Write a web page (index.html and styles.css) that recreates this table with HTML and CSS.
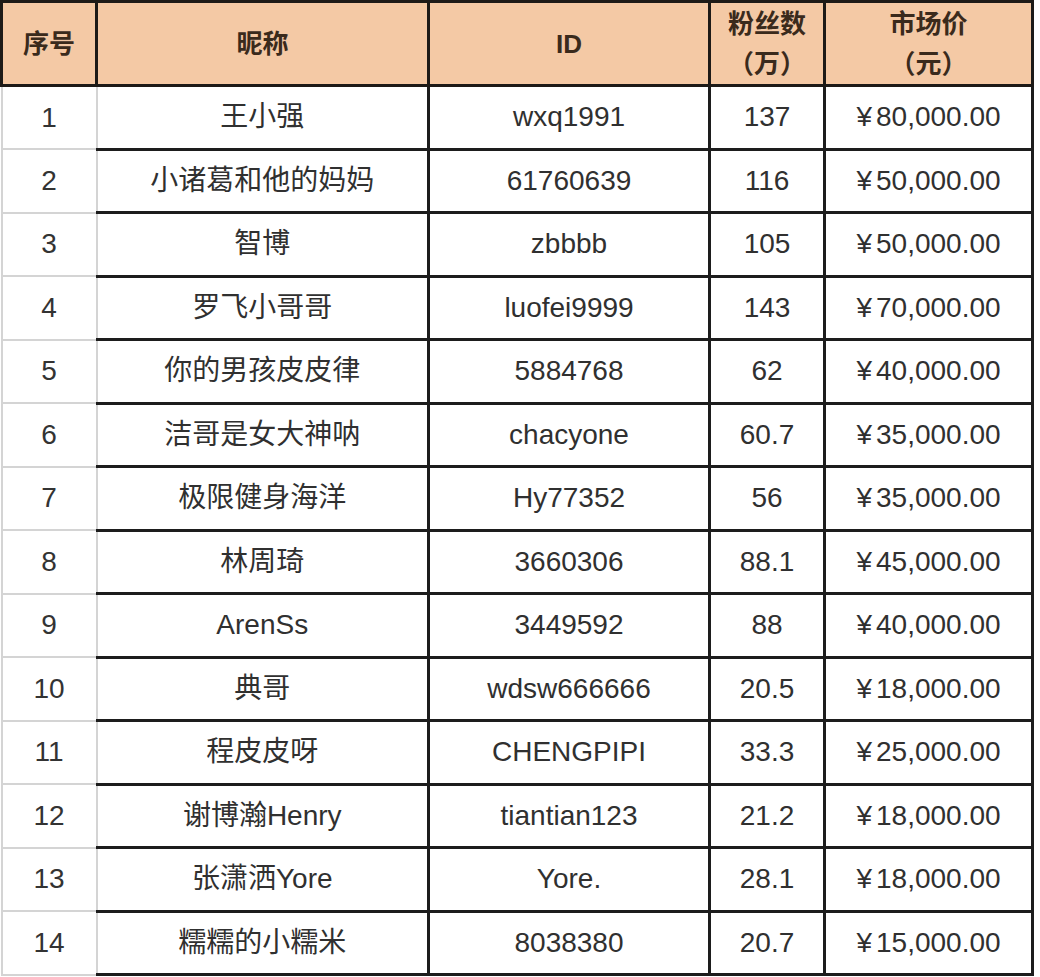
FILE: index.html
```html
<!DOCTYPE html>
<html lang="zh">
<head>
<meta charset="utf-8">
<title>价格表</title>
<link rel="stylesheet" href="styles.css">
</head>
<body>
<table class="sheet">
  <colgroup>
    <col class="c-no"><col class="c-name"><col class="c-id"><col class="c-fans"><col class="c-price">
  </colgroup>
  <thead>
    <tr>
      <th>序号</th>
      <th>昵称</th>
      <th>ID</th>
      <th><span class="line">粉丝数</span><span class="line">（万）</span></th>
      <th><span class="line">市场价</span><span class="line">（元）</span></th>
    </tr>
  </thead>
  <tbody>
    <tr><td>1</td><td>王小强</td><td>wxq1991</td><td>137</td><td><span class="yen">¥</span>80,000.00</td></tr>
    <tr><td>2</td><td>小诸葛和他的妈妈</td><td>61760639</td><td>116</td><td><span class="yen">¥</span>50,000.00</td></tr>
    <tr><td>3</td><td>智博</td><td>zbbbb</td><td>105</td><td><span class="yen">¥</span>50,000.00</td></tr>
    <tr><td>4</td><td>罗飞小哥哥</td><td>luofei9999</td><td>143</td><td><span class="yen">¥</span>70,000.00</td></tr>
    <tr><td>5</td><td>你的男孩皮皮律</td><td>5884768</td><td>62</td><td><span class="yen">¥</span>40,000.00</td></tr>
    <tr><td>6</td><td>洁哥是女大神呐</td><td>chacyone</td><td>60.7</td><td><span class="yen">¥</span>35,000.00</td></tr>
    <tr><td>7</td><td>极限健身海洋</td><td>Hy77352</td><td>56</td><td><span class="yen">¥</span>35,000.00</td></tr>
    <tr><td>8</td><td>林周琦</td><td>3660306</td><td>88.1</td><td><span class="yen">¥</span>45,000.00</td></tr>
    <tr><td>9</td><td>ArenSs</td><td>3449592</td><td>88</td><td><span class="yen">¥</span>40,000.00</td></tr>
    <tr><td>10</td><td>典哥</td><td>wdsw666666</td><td>20.5</td><td><span class="yen">¥</span>18,000.00</td></tr>
    <tr><td>11</td><td>程皮皮呀</td><td>CHENGPIPI</td><td>33.3</td><td><span class="yen">¥</span>25,000.00</td></tr>
    <tr><td>12</td><td>谢博瀚Henry</td><td>tiantian123</td><td>21.2</td><td><span class="yen">¥</span>18,000.00</td></tr>
    <tr><td>13</td><td>张潇洒Yore</td><td>Yore.</td><td>28.1</td><td><span class="yen">¥</span>18,000.00</td></tr>
    <tr><td>14</td><td>糯糯的小糯米</td><td>8038380</td><td>20.7</td><td><span class="yen">¥</span>15,000.00</td></tr>
  </tbody>
</table>
</body>
</html>
```

FILE: styles.css
```css
html, body {
  margin: 0;
  padding: 0;
  background: #ffffff;
}

.sheet {
  border-collapse: collapse;
  table-layout: fixed;
  width: 1031px;
  font-family: "Liberation Sans", "Noto Sans CJK SC", sans-serif;
  font-size: 28px;
  color: #303030;
}

.c-no { width: 95px; }
.c-name { width: 332px; }
.c-id { width: 281px; }
.c-fans { width: 115px; }
.c-price { width: 208px; }

.sheet th {
  height: 81px;
  padding: 0;
  background: #f4c9a5;
  border: 3px solid #1d1a17;
  font-weight: bold;
  font-size: 26px;
  color: #3a2a1c;
  text-align: center;
  vertical-align: middle;
  line-height: 40px;
}

.sheet th .line {
  display: block;
}

.sheet td {
  height: 60.5px;
  padding: 0;
  text-align: center;
  vertical-align: middle;
  border: 3px solid #1d1d1d;
  line-height: 1;
}

.sheet td:first-child {
  border: 2px solid #d4d4d4;
  color: #333333;
}

.sheet td:nth-child(2) {
  border-left: none;
}

.yen {
  margin-right: 4px;
}
```
